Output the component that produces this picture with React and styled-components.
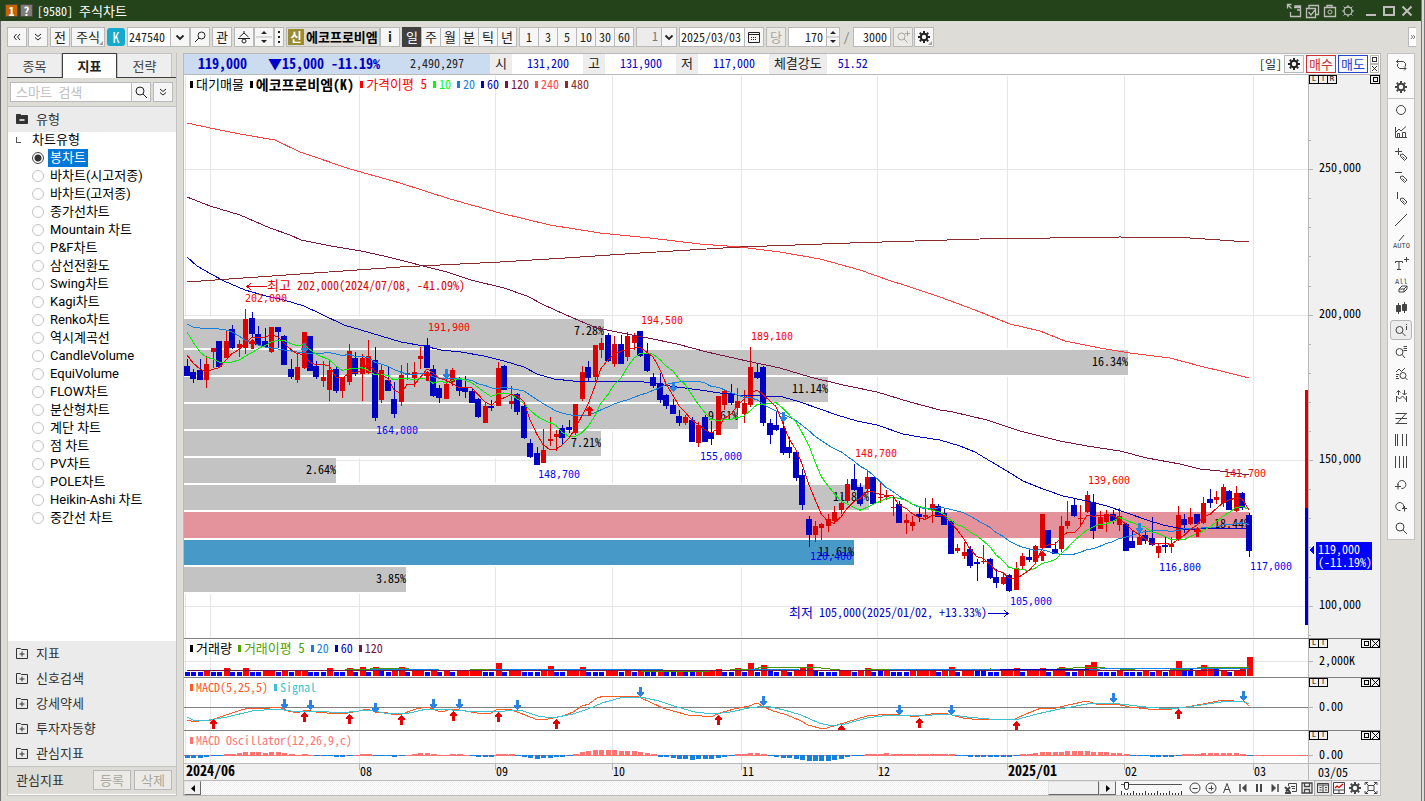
import React, { useState } from "react";
import styled, { createGlobalStyle, css } from "styled-components";

/* ---------- chart data ---------- */

const FIRST_X = 187;
const STEP = 6.474;
const xAt = (i) => Math.round(FIRST_X + i * STEP);

// direction, high, body top, body bottom, low
const CANDLES = `
B359,366,376,376 B369,372,379,383 B359,370,380,380 R356,364,380,388 R348,348,352,368
B341,341,367,368 R331,341,358,358 B325,329,348,349 R340,344,348,357 R309,319,348,354
B312,318,334,337 B326,334,345,346 B328,341,347,347 R327,327,352,353 B327,327,332,348
B335,336,365,365 B359,369,377,379 R353,367,380,383 R332,332,368,369 B336,336,371,371
B361,366,377,379 R361,377,381,387 R360,370,390,401 B367,369,391,393 R377,377,391,398
R344,351,382,385 B352,358,374,376 R354,358,374,401 R340,356,373,374 B347,360,418,421
R364,370,400,403 B366,380,391,391 B382,399,414,418 R365,375,402,406 R363,373,375,380
R362,372,378,387 R347,356,359,369 B338,345,368,368 B365,369,396,397 B385,388,398,403
R379,384,399,399 R368,370,382,386 B377,379,391,396 B376,387,392,398 B388,391,403,403
B398,399,417,418 R402,406,423,423 B400,406,408,411 R362,368,406,406 B365,366,390,390
R386,401,404,409 B393,394,412,415 B403,406,438,439 B439,443,457,458 B447,453,465,465
R429,450,463,463 R417,439,441,446 R430,434,437,451 B425,428,438,444 B420,427,430,433
R404,404,433,435 R366,372,399,401 B361,367,378,381 R345,345,377,382 R338,343,350,358
B333,335,361,362 R336,344,364,367 B335,344,364,364 R332,336,357,361 R333,335,343,350
B331,331,356,357 B343,354,371,372 B373,377,386,388 B373,383,400,403 B394,395,406,409
B399,405,414,414 B410,416,423,426 R415,417,423,425 B417,420,442,442 R422,425,443,447
B415,417,442,442 B421,432,439,445 R396,396,435,435 R390,391,405,410 B384,393,403,405
R388,401,408,415 R390,403,414,423 R347,367,405,407 B363,372,378,379 B366,367,423,426
B419,423,435,444 B411,425,430,431 B417,428,453,455 B437,447,453,458 B450,452,478,481
B469,475,505,510 B516,519,535,547 R521,526,535,542 R523,524,528,540 R514,519,526,532
R506,512,521,524 R495,503,510,514 R479,484,501,503 B464,479,490,491 B483,487,504,506
R470,477,489,493 B477,477,504,504 R483,497,498,503 R490,495,497,500 R496,507,508,516
B501,504,523,523 R514,520,523,534 R516,522,526,531 B508,514,517,522 R498,515,517,520
R498,504,510,523 B504,506,517,517 B509,513,525,525 B520,521,554,554 R544,548,551,553
R542,552,556,559 B546,549,566,568 B559,562,564,581 R545,561,562,564 B558,559,578,579
B569,577,583,588 R572,577,584,585 B574,575,591,592 R562,568,590,590 R553,556,566,569
B548,557,560,562 R545,546,562,564 R514,514,548,549 B530,530,548,548 B542,549,554,554
R516,526,549,552 R501,521,526,529 B498,505,516,517 R505,518,519,525 R491,495,512,513
B494,502,531,539 R511,517,529,529 R510,514,522,532 B510,514,521,524 R508,516,525,531
B523,524,551,551 B530,541,548,548 R532,537,545,545 B530,535,541,544 B517,538,545,546
R543,546,553,558 B536,545,547,553 R537,544,547,553 R506,515,540,541 B514,519,525,533
R508,517,524,525 B514,514,524,524 R497,503,523,524 B489,499,503,508 R491,497,500,504
R484,487,503,507 B490,491,510,510 R486,493,511,512 B492,493,508,510 B513,515,551,557`
  .trim()
  .split(/\s+/)
  .map((row) => {
    const [high, top, bottom, low] = row.slice(1).split(",").map(Number);
    const up = row[0] === "R";
    return { up, high, top, bottom, low, close: up ? top : bottom };
  });

// moving average over the closes, with the values before the first full window given
const average = (size, lead) =>
  CANDLES.map((_, i) => {
    if (i < lead.length) return [xAt(i), lead[i]];
    const part = CANDLES.slice(i - size + 1, i + 1);
    return [xAt(i), part.reduce((sum, c) => sum + c.close, 0) / size];
  });

const MA5 = average(5, [355, 363, 369, 372]);
const MA10 = average(10, [332, 342, 352, 357, 359, 362, 363, 362, 360]);
const MA20 = average(
  20,
  [324, 327, 328, 328, 328, 329, 330, 332, 336, 340, 342, 345, 347, 348, 349, 350, 351, 352, 353]
);

const parse = (text) =>
  text
    .trim()
    .split(/\s+/)
    .map((pair) => pair.split(",").map(Number));

const MA60 = parse(`187,257 197,266 211,274 224,281 245,290 266,296 284,300 304,306 321,314
  344,325 361,330 381,336 401,342 424,346 441,350 461,352 484,356 504,361 524,367 537,374 554,379
  573,381 637,381 657,384 677,387 700,390 720,393 737,395 763,396 783,397 800,402 820,409 837,415
  857,421 877,425 903,434 920,437 940,440 960,446 975,452 990,461 1007,471 1023,481 1043,489
  1063,496 1087,501 1107,506 1127,513 1147,520 1163,525 1183,529 1197,529 1248,528`);
const MA120 = parse(`187,197 210,206 240,215 270,228 290,235 301,240 331,246 361,251 384,256
  404,261 427,267 447,272 471,280 504,288 527,296 544,305 564,314 580,321 597,328 627,334 643,337
  677,344 707,352 747,361 780,368 810,377 843,385 877,392 910,402 940,410 953,412 987,420 1020,431
  1060,441 1087,446 1120,451 1147,458 1180,464 1200,469 1220,471 1249,475`);
const MA240 = parse(`187,123 215,129 240,134 275,140 300,152 350,169 400,183 450,199 500,213
  550,225 600,233 650,238 700,244 740,247 780,252 820,259 860,270 888,280 910,287 940,297 975,310
  1010,324 1040,331 1065,341 1100,348 1130,353 1170,358 1200,366 1225,372 1249,378`);
const MA480 = parse(`187,282 300,274 400,267 500,262 565,258 640,253 740,247 850,243 980,239
  1120,237 1190,238 1249,242`);

const PROFILE = [
  [319, 30, 604, "7.28%"],
  [350, 25, 1128, "16.34%"],
  [377, 25, 828, "11.14%"],
  [404, 25, 738, "9.61%"],
  [431, 25, 601, "7.21%"],
  [458, 25, 336, "2.64%"],
  [485, 25, 869, "11.82%"],
  [512, 26, 1250, "18.44%", "#e4929b"],
  [540, 25, 854, "11.61%", "#4799c7"],
  [567, 25, 406, "3.85%"],
];

const PEAKS = [
  [245, 302, "202,000"],
  [428, 331, "191,900"],
  [641, 324, "194,500"],
  [751, 340, "189,100"],
  [855, 457, "148,700"],
  [1088, 484, "139,600"],
  [1224, 477, "141,700"],
];
const TROUGHS = [
  [376, 434, "164,000"],
  [538, 478, "148,700"],
  [700, 460, "155,000"],
  [810, 560, "120,400"],
  [1010, 605, "105,000"],
  [1159, 571, "116,800"],
  [1250, 570, "117,000"],
];

const PRICE_UP = [[252, 339], [427, 371], [589, 406], [1042, 551], [1197, 527]];
const PRICE_DOWN = [[304, 353], [446, 379], [673, 392], [783, 422], [1139, 533]];

const MONTHS = [
  [210, ""],
  [359, "08"],
  [495, "09"],
  [612, "10"],
  [741, "11"],
  [877, "12"],
  [1007, "2025/01"],
  [1124, "02"],
  [1253, "03"],
];

const VOLUME_COLORS =
  "BBBRBBRBBRBBRRBRBRRBBBRBBRBRBRBBRRBRRBRBRBRRRRBBRBRRBBBRRBBRRRBBBRRBRBRBBRBBRBBRRRRBBRBRBRBB" +
  "RBRRRBBBBRRBRBBBRBBBRRRBBRBBRRRBBBRRBBRRBBRBBBRRBBBBRBBBRBRBRBBBRRBBRBRR";
const VOLUME_TALL = {
  6: 8, 9: 8, 22: 8, 25: 8, 27: 9, 29: 9, 30: 7, 32: 8, 33: 9, 48: 13, 55: 7, 56: 10, 61: 9,
  68: 7, 70: 7, 82: 7, 85: 8, 87: 13, 89: 11, 90: 7, 95: 9, 96: 12, 97: 6, 105: 8, 107: 6,
  115: 7, 118: 9, 122: 6, 123: 6, 128: 8, 132: 8, 135: 9, 139: 11, 140: 14, 153: 15, 154: 8,
  155: 8, 157: 11, 158: 8, 159: 8, 163: 8, 164: 19,
};
const VOLUME_RED = [87, 89, 95, 96, 105, 115, 118, 128, 132, 135, 139, 140, 153, 157, 158, 163, 164];
const volumeIsRed = (i) =>
  i > 85 && VOLUME_TALL[i] ? VOLUME_RED.includes(i) : VOLUME_COLORS[i] === "R";

const OSCILLATOR = [
  -3, -3, -3, -2, -1, -1, 1, 1, 2, 3, 3, 3, 2, 3, 3, 2, 1, 0, 1, 0, -1, -1, -1, -2, -2, -1, 0, 1,
  1, -1, -1, -1, -2, -1, 0, 1, 2, 2, 1, 0, 0, 1, 1, 0, -1, -2, -2, -2, 1, 1, 1, -1, -2, -3, -4,
  -3, -3, -2, -2, -1, 1, 3, 4, 5, 5, 5, 5, 4, 4, 4, 3, 2, 1, -2, -2, -3, -4, -4, -5, -4, -4, -4,
  -3, -2, -1, 1, 1, 2, 2, 1, -1, -2, -3, -3, -4, -5, -6, -6, -6, -6, -5, -4, -2, -1, -1, 1, 1, 1,
  2, 1, 1, 1, 1, 1, 1, 1, 1, 1, 1, -1, -1, -2, -2, -2, -2, -2, -2, -2, -1, 1, 1, 2, 3, 3, 3, 3, 4,
  4, 4, 4, 3, 3, 3, 2, 2, 1, -1, -1, -1, -2, -2, -2, -2, -1, 1, 1, 1, 2, 2, 2, 2, 2, 2, 1, -1,
];

const MACD = parse(`187,720 195,722 202,720 211,720 223,716 238,711 248,708 259,709 270,708 279,707
  288,711 298,713 305,710 316,712 338,714 348,713 359,711 368,709 375,712 384,712 395,715 402,714
  416,709 427,707 441,712 452,709 466,711 477,713 491,713 498,709 509,709 520,713 530,717 538,720
  548,719 563,716 573,712 582,706 589,704 597,698 604,696 613,697 630,696 639,697 652,703 663,708
  673,711 688,715 702,716 713,716 720,713 734,709 749,706 757,703 764,707 773,711 784,714 792,717
  801,721 808,725 823,729 834,726 847,722 867,716 889,714 910,716 919,716 937,713 948,714 963,718
  972,719 1002,720 1015,719 1026,714 1041,708 1052,709 1068,705 1087,701 1096,704 1116,704 1129,707
  1148,709 1172,709 1186,707 1203,704 1223,700 1245,702 1249,706`);
const SIGNAL = parse(`187,717 193,720 209,720 227,717 252,711 277,709 291,711 320,711 338,713
  370,710 384,713 405,714 427,709 452,710 477,712 505,711 520,710 538,716 552,718 573,714 588,709
  602,703 620,698 641,697 659,701 677,707 695,712 713,714 730,712 749,708 766,706 784,710 801,715
  819,723 832,726 845,724 867,718 889,715 919,716 945,714 967,717 989,719 1015,720 1037,714
  1055,710 1081,705 1094,703 1120,704 1146,707 1172,709 1194,706 1221,702 1242,701 1249,704`);
const MACD_DOWN = [
  [284, 709], [310, 710], [375, 713], [433, 709], [459, 709], [517, 710], [640, 697],
  [763, 706], [899, 715], [951, 715], [1113, 703], [1243, 701],
];
const MACD_UP = [
  [213, 719], [304, 712], [349, 714], [401, 715], [453, 711], [498, 712], [556, 719], [718, 715],
  [841, 725], [919, 718], [1016, 721], [1178, 709],
];

const CHART_TYPES = [
  "봉차트", "바차트(시고저종)", "바차트(고저종)", "종가선차트", "Mountain 차트", "P&F차트",
  "삼선전환도", "Swing차트", "Kagi차트", "Renko차트", "역시계곡선", "CandleVolume", "EquiVolume",
  "FLOW차트", "분산형차트", "계단 차트", "점 차트", "PV차트", "POLE차트", "Heikin-Ashi 차트",
  "중간선 차트",
];

/* ---------- icons ---------- */

const PENCIL = <path d="M7.5 8.5v2l4 4 2.5-2.5-4-4zM9.5 10.5l2 2" />;

const ICONS = {
  gear: (
    <>
      <circle cx="8" cy="8" r="3.2" strokeWidth="2" />
      <path
        strokeWidth="2"
        d="M8 2v2M8 12v2M2 8h2M12 8h2M3.8 3.8l1.4 1.4M10.8 10.8l1.4 1.4M12.2 3.8l-1.4 1.4M5.2 10.8l-1.4 1.4"
      />
    </>
  ),
  swap: <path d="M5.5 2.5l-2 2 2 2M3.5 4.500h7l2 2v3M4.5 7v2.500l2 2h6.500M11 9.500l2 2-2 2" />,
  circle: <circle cx="8" cy="8" r="4.5" />,
  chart: <path d="M2.5 3v10.500H14M3 8l3-3 2 2 5-4.500M4.5 13.500v-4h2v4M9.5 13.500V8.500h3v5" />,
  crossPen: <>{PENCIL}<path d="M2 5.500h7M5.500 2v7" /></>,
  linePen: <>{PENCIL}<path d="M2 4.500h7" /></>,
  barPen: <>{PENCIL}<path d="M4.500 2v7" /></>,
  line: <path d="M2 14L14 2" />,
  text: <><path d="M2.5 7V5.500h7V7M6 5.500v8M4 13.500h4" /><path d="M13.500 1v5M11 3.500h5" /></>,
  candles: (
    <>
      <path fill="currentColor" d="M3.500 5.500h4v6h-4zM9.500 4.500h4v6h-4z" />
      <path d="M5.500 3v11M11.500 2v11" />
    </>
  ),
  zoomInfo: <><circle cx="6.5" cy="8" r="3.5" /><path d="M9 10.500l3.500 3.500M13.500 4v4M13.500 2v1" /></>,
  zoomList: (
    <><circle cx="6.5" cy="8" r="3.5" /><path d="M9 10.500l3 3.500M10.500 2.500H14M10.500 4.500H14M10.500 6.500H14" /></>
  ),
  zoomWave: (
    <>
      <path d="M3 6l3-3 2.500 2.500L12 2M3 8.500h3M3 10.500h2M3 12.500h3" />
      <circle cx="10" cy="9.5" r="3" />
      <path d="M12 11.500l2.500 2.500" />
    </>
  ),
  swapWave: (
    <path d="M3.500 14V8l3 3 3-3 4 4v2M5.500 7V2.500M3.500 4.500l2-2 2 2M11.500 2v5M9.500 5l2 2 2-2M13.500 8v6" />
  ),
  zed: <path d="M2.500 3.500H14M2.500 13.500H14M13 3.500l-9 10M2.500 8.500H14" />,
  barsA: <path d="M2.500 2v12M4.500 2v12M9.500 2v12M13.500 2v12" />,
  barsB: <path d="M2.500 2v12M6.500 2v12M10.500 2v12M13.500 2v12" />,
  undo: <path d="M5 9.500A4 4 0 1 1 8.500 12.500M2 10.500h6M5 7.500v6" />,
  redo: <path d="M10.500 10A4 4 0 1 0 7.500 12.500M9 10.500h5M11.500 8v5.500" />,
  search: <><circle cx="7" cy="7" r="4" /><path d="M10 10l4 4" /></>,
  searchLeft: <><circle cx="9.5" cy="6.5" r="3.5" /><path d="M7 9l-4 4" /></>,
  zoomPlus: <><circle cx="6.5" cy="7.5" r="3.5" /><path d="M9 10l3.500 3.500M12.500 2v5M10 4.500h5" /></>,
  left2: <path d="M7.500 5L5 8l2.500 3M11 5L8.500 8 11 11" />,
  down2: <path d="M5 5l3 2.500L11 5M5 8.500L8 11l3-2.500" />,
  right2: <path d="M5 5l2.500 3L5 11M8.500 5L11 8l-2.500 3" />,
  chevron: <path strokeWidth="1.8" d="M4.500 6.500L8 10l3.500-3.500" />,
  calendar: (
    <>
      <path d="M2.500 3.500h11v10h-11zM2.500 5.500h11" />
      <path strokeDasharray="1 1" d="M5 8.500h6M5 10.500h6" />
    </>
  ),
  spin: (
    <>
      <path fill="currentColor" stroke="none" d="M5 5l3-3 3 3zM5 11l3 3 3-3z" />
      <path stroke="#b9b9b9" d="M0 8h16" />
    </>
  ),
  group: <><path d="M8 2v2M3.500 8L8 4l4.500 4M2 9.500h12" /><circle cx="8" cy="12" r="2" /></>,
  dots: <path strokeWidth="2" d="M8 2v2M8 7v2M8 12v2" />,
  folder: (
    <>
      <path fill="currentColor" d="M2.500 3.500h4l1 1h6v8h-11z" />
      <path stroke="#fff" strokeWidth="1.5" d="M5.500 9h5" />
    </>
  ),
  folderPlus: <path d="M2.500 3.500h4l1 1h6v9h-11zM8 6.500v5M5.500 9h5" />,
  export: <path strokeWidth="1.3" d="M1.500 5.500v-4h4M1.500 1.500l4 4M8 4.500h6.500v9h-10V9M9 4.500V3h5.500v2M11 7h3" />,
  windows: <path strokeWidth="1.3" d="M2.500 5.500h9v9h-9zM5 5V2.500h9.500v9H12M4.500 9l2.500 3 4-5" />,
  camera: <><path strokeWidth="1.3" d="M2.500 4.500h11v9h-11zM5 4V2.500h5V4" /><circle cx="8" cy="9" r="2" /></>,
  sun: (
    <>
      <circle cx="8" cy="8" r="4" strokeWidth="1.3" />
      <path d="M8 2v2M8 12v2M2 8h2M12 8h2M3.500 3.500l1.500 1.500M11 11l1.500 1.500M12.500 3.500L11 5M5 11l-1.500 1.500" />
    </>
  ),
  minimize: <path strokeWidth="2" d="M3 12h10" />,
  maximize: <path strokeWidth="2" d="M3 4h10v8H3z" />,
  close: <path strokeWidth="2" d="M3.500 3.500l9 9M12.500 3.500l-9 9" />,
  minusRound: <><circle cx="8" cy="8" r="5" /><path d="M5.500 8.500h5" /></>,
  plusRound: <><circle cx="8" cy="8" r="5" /><path d="M5.500 8.500h5M8.500 5.500v5" /></>,
  letterA: <path d="M4.500 13L8 3.500l3.500 9.500M5.500 9.500h5" />,
  first: <><path strokeWidth="1.5" d="M5 4v8" /><path fill="currentColor" d="M11 4.500v7L7.500 8z" /></>,
  pause: <path strokeWidth="2" d="M6 4v8M10 4v8" />,
  last: <><path strokeWidth="1.5" d="M11 4v8" /><path fill="currentColor" d="M5 4.500v7L8.500 8z" /></>,
  transfer: (
    <>
      <path d="M5.500 6V3.500h8v8H9M8 6.500h4M9 8.500h3" />
      <path strokeWidth="2" d="M2 7l5 5M7 7l-4 4.500M2 13h6" />
    </>
  ),
  save: <path strokeWidth="1.3" d="M3 3h10v10H3zM5.500 3v3.500h5V3M5.500 13V9.500h5V13" />,
  grid: <path d="M2.500 3.500h11v9h-11zM2.500 5h11M8 5v8M4.500 7.500h2M4.500 10h2M10 7.500h2M10 10h2" />,
  report: (
    <>
      <path d="M2.500 2.500h11v11h-11zM2.500 10h11M8 10v3" />
      <path stroke="#d00" strokeWidth="1.3" d="M4 8l2-2 2 1.500L12 4" />
    </>
  ),
  fit: (
    <path d="M2 5V2.500h3M11 2.500h3V5M14 11v2.500h-3M5 13.500H2V11M5 5.500h6v5H5zM3 3l2 2M13 3l-2 2M3 13l2-2M13 13l-2-2" />
  ),
};

const Icon = ({ name, size = 16 }) => (
  <Svg width={size} height={size} viewBox="0 0 16 16" aria-hidden="true">
    {ICONS[name]}
  </Svg>
);

const UpArrow = ({ x, y }) => (
  <path fill="#e60000" d={`M${x} ${y}l4 4v1h-2v5h-3v-5h-2v-1l3-4z`} />
);
const DownArrow = ({ x, y }) => (
  <path fill="#2a82e4" d={`M${x + 1} ${y}l3-4v-1h-2v-5h-3v5h-2v1l3 4z`} />
);
const Line = ({ points, color }) => (
  <polyline points={points.map((p) => p.join(",")).join(" ")} fill="none" stroke={color} />
);

/* ---------- chart panes ---------- */

const MonthLines = () => (
  <>
    {[185, ...MONTHS.map(([x]) => x)].map((x) => (
      <rect key={x} x={x - 184} y="1" width="1" height="100%" fill="#e6e6e6" />
    ))}
  </>
);

const PricePlot = () => (
  <Plot>
    <MonthLines />
    {[169, 315, 460, 606].map((y) => (
      <rect key={y} x="0" y={y - 75} width="100%" height="1" fill="#e6e6e6" />
    ))}
    <g transform="translate(-184 -75)">
      {PROFILE.map(([y, h, end, label, color]) => (
        <g key={y}>
          <rect x="184" y={y - 2} width={end - 184} height={h + 4} fill="#fff" />
          <rect x="184" y={y} width={end - 184} height={h} fill={color || "#c3c3c3"} />
        </g>
      ))}
      {PROFILE.map(([y, , end, label]) => (
        <text key={y} x={end} y={y + 16} textAnchor="end">
          {label}
        </text>
      ))}
      {CANDLES.map((c, i) => (
        <g key={i} fill={c.up ? "#dc0000" : "#0000c3"}>
          <rect x={xAt(i)} y={c.high} width="1" height={c.low - c.high} />
          <rect
            x={xAt(i) - (c.up ? 2 : 3)}
            y={c.top}
            width={c.up ? 5 : 6}
            height={Math.max(1, c.bottom - c.top)}
          />
        </g>
      ))}
      <Line points={MA480} color="#8f2a2a" />
      <Line points={MA240} color="#ff4040" />
      <Line points={MA120} color="#781446" />
      <Line points={MA60} color="#0000c3" />
      <Line points={MA20} color="#1482dc" />
      <Line points={MA10} color="#00f000" />
      <Line points={MA5} color="#f00000" />
      {PRICE_UP.map(([x, y]) => <UpArrow key={x} x={x} y={y} />)}
      {PRICE_DOWN.map(([x, y]) => <DownArrow key={x} x={x} y={y} />)}
      {PEAKS.map(([x, y, label]) => (
        <Mark key={x} x={x} y={y} fill="#f00">{label}</Mark>
      ))}
      {TROUGHS.map(([x, y, label]) => (
        <Mark key={x} x={x} y={y} fill="#00f">{label}</Mark>
      ))}
      <path d="M267 286.500h-20M251 283l-4 3.500 4 3.500" fill="none" stroke="#dc0000" />
      <text x="267" y="290" fill="#dc0000">
        <tspan className="ko">최고</tspan> 202,000(2024/07/08, -41.09%)
      </text>
      <path d="M988 613.500h20M1004 610l4 3.500-4 3.500" fill="none" stroke="#0000c3" />
      <text x="789" y="617" fill="#0000c3">
        <tspan className="ko">최저</tspan> 105,000(2025/01/02, +13.33%)
      </text>
    </g>
    <svg x="100%" overflow="visible">
      <rect x="-3" y="315" width="3" height="118" fill="#dc0000" />
      <rect x="-3" y="433" width="3" height="117" fill="#0000c3" />
    </svg>
  </Plot>
);

const VolumePlot = () => (
  <Plot>
    <MonthLines />
    <rect x="0" y="22" width="100%" height="1" fill="#e6e6e6" />
    <g transform="translate(-184 -639)">
      {CANDLES.map((_, i) => {
        const red = volumeIsRed(i);
        const height = VOLUME_TALL[i] || (red ? 5 : 4);
        return (
          <rect
            key={i}
            x={xAt(i) - 2}
            y={676 - height}
            width={red ? 6 : 5}
            height={height}
            fill={red ? "#f00" : "#00f"}
          />
        );
      })}
      <Line
        color="#4b9600"
        points={parse(`187,671 230,670 320,671 370,669 405,668 412,670 440,671 500,669 530,669 545,671
          580,669 610,669 640,671 690,672 730,670 755,669 762,667 775,667 790,668 812,667 830,669
          850,671 880,669 930,671 990,669 1040,670 1090,667 1120,669 1150,671 1190,669 1205,667
          1245,668 1249,666`)}
      />
      <Line
        color="#1482dc"
        points={parse("187,670 300,671 440,669 490,669 560,669 625,669 700,671 800,669 890,669 960,670 1100,669 1249,668")}
      />
      <Line color="#0000c3" points={parse("187,670 600,670 1000,670 1090,669 1249,669")} />
      <Line color="#781446" points={parse("187,670.5 1246,670.5")} />
    </g>
  </Plot>
);

const MacdPlot = () => (
  <Plot>
    <MonthLines />
    <rect x="0" y="29" width="100%" height="1" fill="#808080" />
    <g transform="translate(-184 -678)">
      <Line points={MACD} color="#ff5a28" />
      <Line points={SIGNAL} color="#3cc3cf" />
      {MACD_UP.map(([x, y]) => <UpArrow key={x} x={x} y={y} />)}
      {MACD_DOWN.map(([x, y]) => <DownArrow key={x} x={x} y={y} />)}
    </g>
  </Plot>
);

const OscillatorPlot = () => (
  <Plot>
    <MonthLines />
    <rect x="0" y="24" width="100%" height="1" fill="#ff7373" />
    {OSCILLATOR.map((v, i) =>
      v ? (
        <rect
          key={i}
          x={xAt(i) - 186}
          y={v > 0 ? 24 - v : 24}
          width={Math.abs(v) > 1 ? 5 : 6}
          height={Math.abs(v) + (v > 0 ? 1 : 0)}
          fill={v > 0 ? "#ff7373" : "#1482dc"}
        />
      ) : null
    )}
  </Plot>
);

const PaneButtons = ({ letters, close }) => (
  <PaneTools>
    <div>
      {letters.map((l) => <TinyButton key={l}>{l}</TinyButton>)}
    </div>
    <div>
      <TinyButton aria-label="확대">
        <svg width="5" height="5"><rect x=".5" y=".5" width="4" height="4" fill="none" stroke="#000" /></svg>
      </TinyButton>
      {close && (
        <TinyButton aria-label="닫기">
          <svg width="7" height="7"><path d="M0 0l7 7M7 0L0 7" stroke="#000" /></svg>
        </TinyButton>
      )}
    </div>
  </PaneTools>
);

const Legend = ({ items }) => (
  <LegendRow>
    {items.map(([label, color, size = 12]) => (
      <LegendItem key={label} $color={color} $size={size}>{label}</LegendItem>
    ))}
  </LegendRow>
);

/* ---------- page ---------- */

const TitleBar = () => (
  <Title>
    <WindowNumber>1</WindowNumber>
    <WindowNumber $gray>?</WindowNumber>
    <WindowName>[9580] <Korean>주식차트</Korean></WindowName>
    <TitleTools>
      {["export", "windows", "camera", "sun"].map((name) => (
        <TitleButton key={name} aria-label={name}><Icon name={name} /></TitleButton>
      ))}
      <WindowButtons>
        {["minimize", "maximize", "close"].map((name) => (
          <TitleButton key={name} aria-label={name}><Icon name={name} /></TitleButton>
        ))}
      </WindowButtons>
    </TitleTools>
  </Title>
);

const Toolbar = () => {
  const [period, setPeriod] = useState("일");
  return (
    <Bar>
      <Group $gap={1}>
        <Button aria-label="이전"><Icon name="left2" /></Button>
        <Button aria-label="펼치기"><Icon name="down2" /></Button>
      </Group>
      <Group $gap={1}>
        <Button>전</Button>
        <Button $width={34} $corner>주식</Button>
      </Group>
      <MarketButton>K</MarketButton>
      <Group>
        <Field $width={44} defaultValue="247540" aria-label="종목코드" />
        <Button aria-label="최근 종목"><Icon name="chevron" /></Button>
        <Button aria-label="종목 찾기"><Icon name="searchLeft" /></Button>
      </Group>
      <Button>관</Button>
      <Group>
        <Button aria-label="그룹"><Icon name="group" /></Button>
        <Button aria-label="위아래"><Icon name="spin" /></Button>
        <Button $width={10} aria-label="더보기"><Icon name="dots" /></Button>
      </Group>
      <Group>
        <StockName><em>신</em><b>에코프로비엠</b></StockName>
        <Button $bold>i</Button>
      </Group>
      <Group $joined>
        {["일", "주", "월", "분", "틱", "년"].map((label) => (
          <Button key={label} $on={label === period} onClick={() => setPeriod(label)}>
            {label}
          </Button>
        ))}
      </Group>
      <Group $joined>
        {[1, 3, 5, 10, 30, 60].map((n) => <Button key={n} $digits>{n}</Button>)}
      </Group>
      <Group>
        <UnitSelect aria-label="주기" disabled><option>1</option></UnitSelect>
        <SelectArrow><Icon name="chevron" /></SelectArrow>
      </Group>
      <Group>
        <Field $width={66} defaultValue="2025/03/03" aria-label="날짜" />
        <Button aria-label="달력"><Icon name="calendar" /></Button>
      </Group>
      <Button disabled>당</Button>
      <Group>
        <Field $width={39} $right defaultValue="170" aria-label="표시 개수" />
        <Button $width={14} aria-label="개수 조절"><Icon name="spin" /></Button>
      </Group>
      <Slash>/</Slash>
      <Field $width={38} $right defaultValue="3000" aria-label="전체 개수" />
      <Group $gap={1}>
        <Button disabled aria-label="확대"><Icon name="zoomPlus" /></Button>
        <Button $corner aria-label="설정"><Icon name="gear" /></Button>
      </Group>
      <Expander aria-label="더보기"><Icon name="right2" size={10} /></Expander>
    </Bar>
  );
};

const Sidebar = () => {
  const [type, setType] = useState(CHART_TYPES[0]);
  return (
    <Side>
      <Tabs>
        <Tab>종목</Tab>
        <Tab $on>지표</Tab>
        <Tab>전략</Tab>
      </Tabs>
      <SearchRow>
        <SearchInput placeholder="스마트 검색" aria-label="스마트 검색" />
        <Button aria-label="검색"><Icon name="search" /></Button>
        <MoreButton aria-label="펼치기"><Icon name="down2" /></MoreButton>
      </SearchRow>
      <Section $open><Icon name="folder" />유형</Section>
      <Tree>
        <legend>차트유형</legend>
        {CHART_TYPES.map((label) => (
          <TypeRow key={label}>
            <input type="radio" name="type" checked={label === type} onChange={() => setType(label)} />
            <span>{label}</span>
          </TypeRow>
        ))}
      </Tree>
      {["지표", "신호검색", "강세약세", "투자자동향", "관심지표"].map((label) => (
        <Section key={label}><Icon name="folderPlus" />{label}</Section>
      ))}
      <SideFooter>
        <span>관심지표</span>
        <FooterButton disabled>등록</FooterButton>
        <FooterButton disabled>삭제</FooterButton>
      </SideFooter>
    </Side>
  );
};

const QuoteBar = () => (
  <Quote>
    <QuoteMain>
      <strong>119,000</strong>
      <strong>▼15,000 -11.19%</strong>
      <span>2,490,297</span>
    </QuoteMain>
    <QuoteLabel>시</QuoteLabel>
    <QuoteValue>131,200</QuoteValue>
    <QuoteLabel>고</QuoteLabel>
    <QuoteValue>131,900</QuoteValue>
    <QuoteLabel>저</QuoteLabel>
    <QuoteValue>117,000</QuoteValue>
    <QuoteLabel>체결강도</QuoteLabel>
    <QuoteValue $short>51.52</QuoteValue>
    <QuoteTools>
      <span>[일]</span>
      <Button $small aria-label="설정"><Icon name="gear" /></Button>
      <TradeButton $color="#cd3232">매수</TradeButton>
      <TradeButton $color="#2346cd">매도</TradeButton>
      <StackButtons>
        <button aria-label="최대화">
          <svg width="5" height="5"><rect x=".5" y=".5" width="4" height="4" fill="none" stroke="#333" /></svg>
        </button>
        <button aria-label="닫기">
          <svg width="5" height="5"><path d="M0 0l5 5M5 0L0 5" stroke="#333" /></svg>
        </button>
      </StackButtons>
    </QuoteTools>
  </Quote>
);

const PriceAxis = () => (
  <Plot>
    {Array.from({ length: 19 }, (_, i) => (
      <rect key={i} x="0" y={Math.round(65 + i * 29.1)} width={i % 5 === 1 ? 4 : 2} height="1" fill="#b4b4b4" />
    ))}
    <text x="10" y="97">250,000</text>
    <text x="10" y="243">200,000</text>
    <text x="10" y="388">150,000</text>
    <text x="10" y="534">100,000</text>
    <path d="M0 475l5-5v10z" fill="#00f" />
    <rect x="7" y="467" width="56" height="28" fill="#00f" />
    <text x="9" y="479" fill="#fff">119,000</text>
    <text x="9" y="492" fill="#fff">(-11.19%)</text>
  </Plot>
);

const SmallAxis = ({ y, label }) => (
  <Plot>
    <rect x="0" y={y} width="4" height="1" fill="#b4b4b4" />
    <text x="10" y={y + 4}>{label}</text>
  </Plot>
);

const Chart = () => (
  <ChartPanel>
    <QuoteBar />
    <Pane $grow $height={563}>
      <PricePlot />
      <Legend
        items={[
          ["대기매물", "#000", 13],
          ["에코프로비엠(K)", "#000", 14],
          ["가격이평 5", "#f00", 13],
          ["10", "#0f0"],
          ["20", "#1482dc"],
          ["60", "#0000c3"],
          ["120", "#781446"],
          ["240", "#ff4646"],
          ["480", "#8f2a2a"],
        ]}
      />
      <Axis><PriceAxis /><PaneButtons letters={["L", "I", "R"]} /></Axis>
    </Pane>
    <Pane $line $height={39}>
      <VolumePlot />
      <Legend
        items={[
          ["거래량", "#000", 13],
          ["거래이평 5", "#50a000", 13],
          ["20", "#1482dc"],
          ["60", "#0000c3"],
          ["120", "#781446"],
        ]}
      />
      <Axis><SmallAxis y={22} label="2,000K" /><PaneButtons letters={["L", "I"]} close /></Axis>
    </Pane>
    <Pane $line $height={53}>
      <MacdPlot />
      <Legend items={[["MACD(5,25,5)", "#ff5a28"], ["Signal", "#3cc3cf"]]} />
      <Axis><SmallAxis y={29} label="0.00" /><PaneButtons letters={["L", "I"]} close /></Axis>
    </Pane>
    <Pane $line $height={33}>
      <OscillatorPlot />
      <Legend items={[["MACD Oscillator(12,26,9,c)", "#ff7373"]]} />
      <Axis><SmallAxis y={24} label="0.00" /><PaneButtons letters={["L", "I"]} close /></Axis>
    </Pane>
    <Dates>
      <DatePlot>
        <text x="2" y="12" className="year">2024/06</text>
        {MONTHS.map(([x, label]) => (
          <React.Fragment key={x}>
            {label && <rect x={x - 184} y="0" width="1" height="6" fill="#b4b4b4" />}
            <text x={x - 183} y="12" className={label.length > 2 ? "year" : ""}>{label}</text>
          </React.Fragment>
        ))}
      </DatePlot>
      <Axis $pad>03/05</Axis>
    </Dates>
    <BottomBar>
      <ScrollButton aria-label="왼쪽"><svg width="4" height="7"><path d="M4 0v7L0 3.500z" /></svg></ScrollButton>
      <ScrollTrack><ScrollThumb /></ScrollTrack>
      <ScrollButton aria-label="오른쪽"><svg width="4" height="7"><path d="M0 0v7l4-3.500z" /></svg></ScrollButton>
      <ZoomRange type="range" min="0" max="20" defaultValue="1" aria-label="확대 비율" />
      {["minusRound", "plusRound", "letterA", "first", "pause", "last", "transfer", "save", "grid", "report", "gear", "fit"].map(
        (name) => (
          <BottomButton key={name} $on={name === "grid"} aria-label={name}>
            <Icon name={name} />
          </BottomButton>
        )
      )}
    </BottomBar>
  </ChartPanel>
);

const RAIL = [
  "swap", "gear", "circle", "chart", "crossPen", "linePen", "barPen", "line", "auto", "text",
  "all", "candles", "zoomInfo", "zoomList", "zoomWave", "swapWave", "zed", "barsA", "barsB",
  "undo", "redo", "search",
];

const ToolRail = () => (
  <Rail>
    {RAIL.map((name) => (
      <RailButton key={name} $on={name === "zoomInfo"} $divider={name === "gear"} aria-label={name}>
        {name === "auto" && (
          <RailWord>
            <path d="M6 7l5-6" stroke="#444" />
            <text x="0" y="14">AUTO</text>
          </RailWord>
        )}
        {name === "all" && (
          <RailWord>
            <text x="2" y="6">All</text>
            <path d="M6 11l3-3h5l-3 3zM6 11v3h5v-3M11 14l3-3V8" fill="none" stroke="#444" />
          </RailWord>
        )}
        {ICONS[name] && <Icon name={name} />}
      </RailButton>
    ))}
  </Rail>
);

const App = () => (
  <Window>
    <GlobalStyle />
    <TitleBar />
    <Toolbar />
    <Body>
      <Sidebar />
      <Chart />
      <ToolRail />
    </Body>
  </Window>
);

/* ---------- styles ---------- */

const GlobalStyle = createGlobalStyle`
  * {
    box-sizing: border-box;
  }
  body {
    margin: 0;
    background: #dddcd6;
  }
  body, button, input, select, text {
    font-family: "Noto Sans Mono CJK KR", "Noto Sans CJK KR", sans-serif;
    font-size: 12px;
    line-height: 16px;
  }
  button, input, select {
    margin: 0;
    padding: 0;
    color: inherit;
  }
  .year {
    font-size: 14px;
    font-weight: bold;
  }
  .ko {
    font-size: 13px;
  }
`;

const center = css`
  display: flex;
  align-items: center;
  justify-content: center;
`;

const Window = styled.div`
  display: flex;
  flex-direction: column;
  min-height: 100vh;
  color: #222;
  border-left: 1px solid #6e6e6e;
  border-right: 4px double #77777c;
`;

const Svg = styled.svg`
  display: block;
  flex: none;
  fill: none;
  stroke: currentColor;
`;

const Korean = styled.span`
  font-size: 13px;
`;

const Title = styled.header`
  display: flex;
  align-items: center;
  height: 21px;
  margin-left: -1px;
  padding: 0 6px 0 5px;
  gap: 2px;
  color: #fff;
  background: #25431b;
`;

const WindowNumber = styled.span`
  ${center}
  width: 13px;
  height: 13px;
  font-weight: bold;
  background: ${({ $gray }) => ($gray ? "#7d7d7d" : "#c86400")};
  border: 1px solid #4a4a3c;
`;

const WindowName = styled.span`
  margin-left: 2px;
  line-height: 20px;
`;

const TitleTools = styled.div`
  display: flex;
  gap: 2px;
  margin-left: auto;
`;

const WindowButtons = styled.div`
  display: flex;
  gap: 2px;
  margin-left: 5px;
`;

const TitleButton = styled.button`
  color: #bdbdb9;
  background: none;
  border: 0;
`;

const Bar = styled.div`
  display: flex;
  align-items: center;
  height: 32px;
  padding-left: 6px;
  gap: 2px;
`;

const Group = styled.div`
  display: flex;
  gap: ${({ $gap }) => $gap || 0}px;
  ${({ $joined }) =>
    $joined &&
    css`
      button + button {
        margin-left: -1px;
      }
    `}
`;

const Button = styled.button`
  ${center}
  position: relative;
  flex: none;
  width: ${({ $width }) => $width || 20}px;
  height: ${({ $small }) => ($small ? 18 : 20)}px;
  overflow: hidden;
  font-size: ${({ $digits }) => ($digits ? 12 : 13)}px;
  font-weight: ${({ $bold }) => ($bold ? "bold" : "normal")};
  line-height: 18px;
  background: #f6f6f6;
  border: 1px solid #b9b9b9;
  &:disabled {
    color: #a8a79c;
    background: #ebeae6;
  }
  ${({ $on }) =>
    $on &&
    css`
      color: #fff;
      background: #404040;
      border-color: #404040;
    `}
  ${({ $corner }) =>
    $corner &&
    css`
      &::after {
        content: "";
        position: absolute;
        right: 1px;
        bottom: 1px;
        border: 2px solid #a0a0a0;
        border-top-color: transparent;
        border-left-color: transparent;
      }
    `}
`;

const MarketButton = styled.button`
  ${center}
  width: 18px;
  height: 18px;
  color: #fff;
  font-size: 14px;
  background: #14aacd;
  border: 0;
  border-radius: 3px;
`;

const Field = styled.input`
  flex: none;
  width: ${({ $width }) => $width}px;
  height: 20px;
  padding: 0 3px 2px 1px;
  text-align: ${({ $right }) => ($right ? "right" : "left")};
  background: #fff;
  border: 1px solid #b9b9b9;
  & + button {
    margin-left: -1px;
  }
`;

const StockName = styled.div`
  display: flex;
  align-items: center;
  width: 94px;
  height: 20px;
  padding-left: 1px;
  gap: 2px;
  overflow: hidden;
  white-space: nowrap;
  color: #000;
  background: #dddcd6;
  border: 1px solid #b9b9b9;
  em {
    ${center}
    flex: none;
    width: 16px;
    height: 16px;
    color: #fff;
    font-style: normal;
    font-weight: bold;
    background: #9b8c32;
  }
  b {
    font-size: 13px;
  }
`;

const UnitSelect = styled.select`
  width: 25px;
  height: 20px;
  appearance: none;
  text-align: right;
  padding: 0 3px 2px 0;
  color: #777;
  opacity: 1;
  background: #ececec;
  border: 1px solid #b9b9b9;
  border-right: 0;
`;

const SelectArrow = styled.span`
  ${center}
  width: 16px;
  height: 20px;
  background: #f6f6f6;
  border: 1px solid #b9b9b9;
`;

const Slash = styled.span`
  width: 9px;
  text-align: center;
  color: #777;
`;

const Expander = styled.button`
  ${center}
  width: 8px;
  height: 20px;
  margin: 0 5px 0 auto;
  background: #fff;
  border: 1px solid #b9b9b9;
  border-right: 0;
`;

const Body = styled.main`
  display: flex;
  flex: 1;
  align-items: stretch;
  gap: 6px;
  padding: 0 6px 5px;
`;

const Side = styled.aside`
  display: flex;
  flex-direction: column;
  flex: none;
  width: 170px;
  border: 1px solid #c3c3c3;
  border-top: 0;
`;

const Tabs = styled.div`
  display: flex;
  flex: none;
  height: 25px;
  margin-left: -1px;
  border-bottom: 1px solid #404040;
`;

const Tab = styled.button`
  width: 55px;
  height: 24px;
  color: #444;
  font-size: 13px;
  background: #eee;
  border: 1px solid #c3c3c3;
  border-bottom: 0;
  ${({ $on }) =>
    $on &&
    css`
      height: 25px;
      color: #222;
      font-weight: bold;
      background: #fff;
      border-color: #404040;
    `}
`;

const SearchRow = styled.div`
  display: flex;
  align-items: center;
  flex: none;
  height: 28px;
  padding: 0 3px 0 2px;
`;

const SearchInput = styled.input`
  flex: 1;
  min-width: 0;
  height: 20px;
  padding: 0 5px 2px;
  font-size: 13px;
  background: #fff;
  border: 1px solid #b9b9b9;
  border-right: 0;
  &::placeholder {
    color: #c0c0c0;
  }
`;

const MoreButton = styled(Button)`
  margin-left: 2px;
`;

const Section = styled.button`
  display: flex;
  align-items: center;
  flex: none;
  height: ${({ $open }) => ($open ? 26 : 25)}px;
  padding: 0 0 2px 6px;
  gap: 6px;
  color: #333;
  font-size: 13px;
  background: #ebebeb;
  border: 0;
  border-top: ${({ $open }) => ($open ? "1px solid #c3c3c3" : "0")};
`;

const Tree = styled.fieldset`
  flex: 1;
  min-width: 0;
  margin: 0;
  padding: 0;
  color: #000;
  background: #fff;
  border: 0;
  font-family: Roboto, "Noto Sans CJK KR", sans-serif;
  font-size: 13px;
  legend {
    float: left;
    width: 100%;
    height: 17px;
    padding-left: 24px;
    line-height: 15px;
    background: linear-gradient(#555, #555) 8px 5px / 1px 5px no-repeat,
      linear-gradient(#555, #555) 8px 10px / 5px 1px no-repeat;
  }
`;

const TypeRow = styled.label`
  display: flex;
  align-items: center;
  clear: both;
  height: 18px;
  padding-left: 24px;
  input {
    appearance: none;
    width: 12px;
    height: 12px;
    border: 1px solid #c3c3c3;
    border-radius: 50%;
    background: #fff;
  }
  input:checked {
    border-color: #444;
    background: radial-gradient(circle, #333 3px, #fff 4px);
  }
  span {
    margin-left: 4px;
    padding: 0 2px;
    line-height: 18px;
    white-space: nowrap;
  }
  input:checked + span {
    color: #fff;
    background: #0078d7;
  }
`;

const SideFooter = styled.div`
  display: flex;
  align-items: center;
  flex: none;
  height: 29px;
  padding: 0 4px 2px 8px;
  gap: 3px;
  border-top: 1px solid #c3c3c3;
  border-bottom: 1px solid #fff;
  span {
    flex: 1;
    color: #333;
    font-size: 13px;
  }
`;

const FooterButton = styled(Button)`
  width: 38px;
`;

const ChartPanel = styled.section`
  display: flex;
  flex-direction: column;
  flex: 1;
  min-width: 0;
  background: #fff;
  border: 1px solid #b9b9b9;
`;

const Plot = styled.svg`
  display: block;
  flex: 1;
  min-width: 0;
  width: 100%;
  height: 100%;
  overflow: hidden;
  shape-rendering: crispEdges;
`;

const DatePlot = styled(Plot)`
  overflow: visible;
`;

const Mark = styled.text`
  font-family: "DejaVu Sans Mono", monospace;
  font-size: 10px;
`;

const Pane = styled.div`
  position: relative;
  display: flex;
  flex: ${({ $grow }) => ($grow ? 1 : "none")};
  min-height: ${({ $height }) => $height}px;
  height: ${({ $height, $grow }) => ($grow ? "auto" : `${$height}px`)};
  border-top: ${({ $line }) => ($line ? "1px solid #808080" : "0")};
`;

const Axis = styled.div`
  position: relative;
  flex: none;
  width: 72px;
  padding-left: ${({ $pad }) => ($pad ? 9 : 0)}px;
  color: #000;
  background: #f0f0f0;
  border-left: 1px solid #b9b9b9;
`;

const PaneTools = styled.div`
  position: absolute;
  inset: 0 0 auto 0;
  display: flex;
  justify-content: space-between;
  div {
    display: flex;
  }
`;

const TinyButton = styled.button`
  ${center}
  width: 10px;
  height: 9px;
  font-family: "DejaVu Sans", sans-serif;
  font-size: 7px;
  line-height: 7px;
  color: #000;
  background: #f0f0f0;
  border: 1px solid #000;
  & + & {
    margin-left: -1px;
  }
`;

const LegendRow = styled.div`
  position: absolute;
  top: 1px;
  left: 6px;
  display: flex;
  gap: 6px;
`;

const LegendItem = styled.span`
  display: flex;
  align-items: center;
  gap: 3px;
  color: ${({ $color }) => $color};
  font-size: ${({ $size }) => $size}px;
  font-weight: ${({ $size }) => ($size > 13 ? "bold" : "normal")};
  white-space: nowrap;
  &::before {
    content: "";
    width: 3px;
    height: 7px;
    background: currentColor;
  }
`;

const Quote = styled.div`
  display: flex;
  flex: none;
  height: 21px;
  line-height: 18px;
  border-bottom: 1px solid #b9b9b9;
`;

const QuoteMain = styled.div`
  display: flex;
  width: 306px;
  padding-left: 14px;
  background: #cbdcf1;
  strong {
    margin-right: 21px;
    color: #0000c8;
    font-size: 14px;
  }
  span {
    flex: 1;
    padding-right: 26px;
    text-align: right;
  }
`;

const QuoteLabel = styled.span`
  padding: 0 5px;
  font-size: 13px;
  background: #ededed;
`;

const QuoteValue = styled.span`
  width: ${({ $short }) => ($short ? 41 : 71)}px;
  padding-right: ${({ $short }) => ($short ? 0 : 14)}px;
  text-align: right;
  color: #0000c8;
`;

const QuoteTools = styled.div`
  display: flex;
  align-items: center;
  margin-left: auto;
  padding-right: 1px;
  gap: 2px;
`;

const TradeButton = styled.button`
  width: 30px;
  height: 18px;
  color: ${({ $color }) => $color};
  font-size: 13px;
  background: #fafafa;
  border: 1px solid ${({ $color }) => $color};
`;

const StackButtons = styled.div`
  display: flex;
  flex-direction: column;
  button {
    ${center}
    width: 9px;
    height: 9px;
    background: #fff;
    border: 1px solid #b9b9b9;
  }
`;

const Dates = styled.div`
  display: flex;
  flex: none;
  height: 17px;
  background: #f0f0f0;
  border-top: 1px solid #b9b9b9;
`;

const BottomBar = styled.div`
  display: flex;
  align-items: stretch;
  flex: none;
  height: 15px;
  padding-right: 1px;
  background: #f7f7f7;
  border-top: 1px solid #b9b9b9;
`;

const ScrollButton = styled.button`
  ${center}
  flex: none;
  width: 17px;
  background: #f0f0f0;
  border: 1px solid;
  border-color: #e3e3e3 #696969 #696969 #e3e3e3;
`;

const ScrollTrack = styled.div`
  flex: 1;
  background: repeating-conic-gradient(#fff 0 25%, #f0f0f0 0 50%) 0 0 / 2px 2px;
`;

const ScrollThumb = styled.div`
  width: 51px;
  height: 100%;
  margin-left: auto;
  background: #f0f0f0;
  border: 1px solid;
  border-color: #e3e3e3 #696969 #696969 #e3e3e3;
`;

const ZoomRange = styled.input`
  appearance: none;
  flex: none;
  width: 61px;
  margin: 0 5px;
  background: linear-gradient(#555, #555) 0 3px / 100% 1px no-repeat,
    repeating-linear-gradient(90deg, #333 0 1px, transparent 1px 12px) 0 100% / 100% 4px no-repeat,
    repeating-linear-gradient(90deg, #333 0 1px, transparent 1px 3px) 0 100% / 100% 2px no-repeat;
  &::-webkit-slider-thumb {
    appearance: none;
    width: 5px;
    height: 8px;
    margin-bottom: 4px;
    background: #fff;
    border: 1px solid #222;
    border-radius: 0 0 3px 3px;
  }
`;

const BottomButton = styled.button`
  ${center}
  flex: none;
  width: 16px;
  color: #444;
  background: ${({ $on }) => ($on ? "#e6e6e6" : "none")};
  border: 0;
  outline: ${({ $on }) => ($on ? "1px solid #aaa" : "0")};
`;

const Rail = styled.nav`
  display: flex;
  flex-direction: column;
  align-self: flex-start;
  flex: none;
  width: 28px;
  padding: 0 2px;
  background: #fafafa;
  border: 1px solid #c3c3c3;
`;

const RailButton = styled.button`
  ${center}
  height: 22px;
  color: #444;
  background: none;
  border: 0;
  ${({ $divider }) =>
    $divider &&
    css`
      height: 23px;
      margin: 0 -2px;
      border-bottom: 1px solid #c3c3c3;
    `}
  ${({ $on }) =>
    $on &&
    css`
      height: 20px;
      margin: 1px 0;
      background: #ededed;
      border: 1px solid #b4b4b4;
      border-radius: 3px;
    `}
`;

const RailWord = styled.svg`
  width: 16px;
  height: 16px;
  overflow: visible;
  text {
    font-family: "DejaVu Sans Mono", monospace;
    font-size: 7px;
    fill: #444;
  }
`;

export default App;
